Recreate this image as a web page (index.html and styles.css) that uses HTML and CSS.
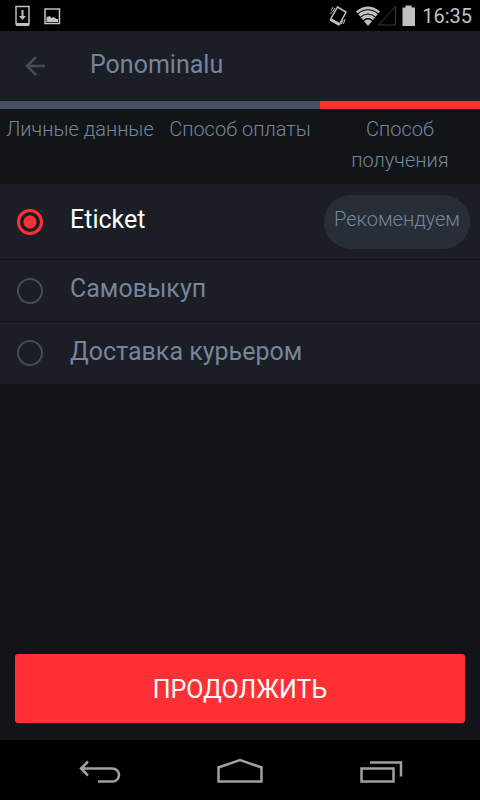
FILE: index.html
```
<!DOCTYPE html>
<html lang="ru">
<head>
<meta charset="utf-8">
<meta name="viewport" content="width=device-width, initial-scale=1">
<title>Ponominalu</title>
<link rel="stylesheet" href="styles.css">
</head>
<body>
<div class="status">
  <div class="status-group">
    <svg width="46" height="22" viewBox="0 0 46 22" fill="none" stroke="#c0c0c0" aria-hidden="true">
      <path d="M1 1.500h13v17.500h-13z" stroke-width="1.500"/>
      <path d="M1 18h13v3h-13z" fill="#c0c0c0" stroke="none"/>
      <path d="M7.500 5v7" stroke-width="2"/>
      <path d="M4 11h7l-3.500 4z" fill="#c0c0c0" stroke="none"/>
      <path d="M30 4h14.500v14.500h-14.500z" stroke-width="1.500"/>
      <path d="M31.500 17v-5l3-1 2 2 2-1 3 2 1.500 0v3z" fill="#c0c0c0" stroke="none"/>
    </svg>
  </div>
  <div class="status-group">
    <svg width="88" height="24" viewBox="0 0 88 24" aria-hidden="true">
      <g fill="none" stroke="#c0c0c0">
        <path d="M8.500 3l8.500 5-6.500 12.500-9-5z" stroke-width="1.500"/>
        <path d="M1.500 15.500l9 5" stroke-width="3"/>
        <path d="M4 3l-2 4M6 4l-2.500 4M2 8v2M14 16l-1.500 4M16 15l-1.500 5" stroke-width="1"/>
      </g>
      <path d="M39 22L27 7.500Q39 -2.500 51 7.500z" fill="#c0c0c0"/>
      <path d="M28.500 10Q39 1.500 49.500 10M31 13.500Q39 6.500 47 13.500M34 17Q39 12.500 44 17" fill="none" stroke="#000" stroke-width="1.200"/>
      <path d="M49.500 21L66.500 2.500v18.500z" fill="none" stroke="#3c3c3c"/>
      <path d="M73.500 3.500h3v-2h6v2h3.500v18.500h-12.500z" fill="#c0c0c0"/>
    </svg>
    <span class="clock">16:35</span>
  </div>
</div>

<header class="bar">
  <button class="back" type="button" aria-label="Назад">
    <svg width="22" height="22" viewBox="0 0 22 22" fill="none" stroke="#414d5f" stroke-width="2.500" aria-hidden="true"><path d="M21 11H3M12 2L3 11l9 9"/></svg>
  </button>
  <h1 class="title">Ponominalu</h1>
</header>

<ol class="steps">
  <li class="step">Личные данные</li>
  <li class="step">Способ оплаты</li>
  <li class="step step-current" aria-current="step">Способ получения</li>
</ol>

<form class="form">
  <div class="options">
    <label class="option option-featured">
      <input class="radio" type="radio" name="delivery" checked>
      <span class="name">Eticket</span>
      <span class="badge">Рекомендуем</span>
    </label>
    <label class="option">
      <input class="radio" type="radio" name="delivery">
      <span class="name">Самовыкуп</span>
    </label>
    <label class="option">
      <input class="radio" type="radio" name="delivery">
      <span class="name">Доставка курьером</span>
    </label>
  </div>
  <button class="submit" type="button">ПРОДОЛЖИТЬ</button>
</form>

<nav class="system">
  <button class="key" type="button" aria-label="Назад">
    <svg width="46" height="26" viewBox="-1 0 46 26" fill="none" stroke="#a0a0a0" stroke-width="2.500" aria-hidden="true"><path d="M3 11.500h31.500a6.500 6.500 0 0 1 0 13H20M10 4.500l-7 7 7 7"/></svg>
  </button>
  <button class="key" type="button" aria-label="Домой">
    <svg width="48" height="26" viewBox="0 0 48 26" fill="none" stroke="#a0a0a0" stroke-width="2.500" aria-hidden="true"><path d="M2.500 24.500v-14L24 3l21.500 7.500v14z"/></svg>
  </button>
  <button class="key" type="button" aria-label="Недавние">
    <svg width="46" height="26" viewBox="0 0 46 26" fill="none" stroke="#a0a0a0" stroke-width="2.500" aria-hidden="true"><path d="M4.500 11.500h32v13h-32zM13 5.500h31v14"/></svg>
  </button>
</nav>
</body>
</html>
```
FILE: styles.css
```
* {
  box-sizing: border-box;
}

body {
  margin: 0;
  min-height: 100vh;
  display: flex;
  flex-direction: column;
  background: #121518;
  color: #75859c;
  font-family: Roboto, "Noto Sans", sans-serif;
}

button {
  border: 0;
  padding: 0;
  background: none;
  font: inherit;
}

svg {
  display: block;
}

.status {
  display: flex;
  justify-content: space-between;
  align-items: center;
  height: 31px;
  padding: 0 8px 0 15px;
  background: #000;
}

.status-group {
  display: flex;
  align-items: center;
  gap: 5px;
}

.clock {
  padding-top: 1px;
  color: #c0c0c0;
  font-size: 20px;
  line-height: 30px;
}

.bar {
  display: flex;
  align-items: center;
  gap: 44px;
  height: 70px;
  padding: 0 24px;
  background: #1b1e25;
}

.title {
  margin: 0;
  padding-bottom: 2px;
  font-size: 25px;
  font-weight: 400;
  line-height: 32px;
}

.steps {
  display: grid;
  grid-template-columns: repeat(3, 1fr);
  margin: 0;
  padding: 0;
  list-style: none;
}

.step {
  border-top: 8px solid #465161;
  padding: 5px 4px 8px;
  font-size: 20px;
  font-weight: 300;
  line-height: 31px;
  text-align: center;
}

.step-current {
  border-color: #ff3034;
}

.form {
  flex: 1;
  display: flex;
  flex-direction: column;
  justify-content: space-between;
}

.option {
  display: flex;
  align-items: center;
  min-height: 62px;
  padding: 0 10px 0 17px;
  background: #1b1e25;
}

.option + .option {
  border-top: 1px solid #121518;
}

.option:last-child {
  min-height: 63px;
}

.option-featured {
  min-height: 75px;
  color: #fff;
}

.radio {
  appearance: none;
  width: 26px;
  height: 26px;
  margin: 0 27px 0 0;
  border: 2px solid #414d5f;
  border-radius: 50%;
}

.radio:checked {
  border-width: 3px;
  border-color: #ff3034;
  background: radial-gradient(circle, #ff3034 6px, transparent 7px);
}

.name {
  flex: 1;
  padding-bottom: 3px;
  font-size: 25px;
  line-height: 32px;
}

.badge {
  padding: 9px 10px 14px;
  border-radius: 28px;
  background: #272e37;
  color: #75859c;
  font-size: 20px;
  font-weight: 300;
  line-height: 31px;
}

.submit {
  margin: 0 15px 17px;
  padding: 19px 18px 17px;
  border-radius: 3px;
  background: #ff3034;
  color: #fff;
  font-size: 25px;
  line-height: 33px;
}

.system {
  display: flex;
  justify-content: center;
  gap: 93px;
  height: 60px;
  background: #000;
}

.key {
  display: flex;
  align-items: center;
}
```
